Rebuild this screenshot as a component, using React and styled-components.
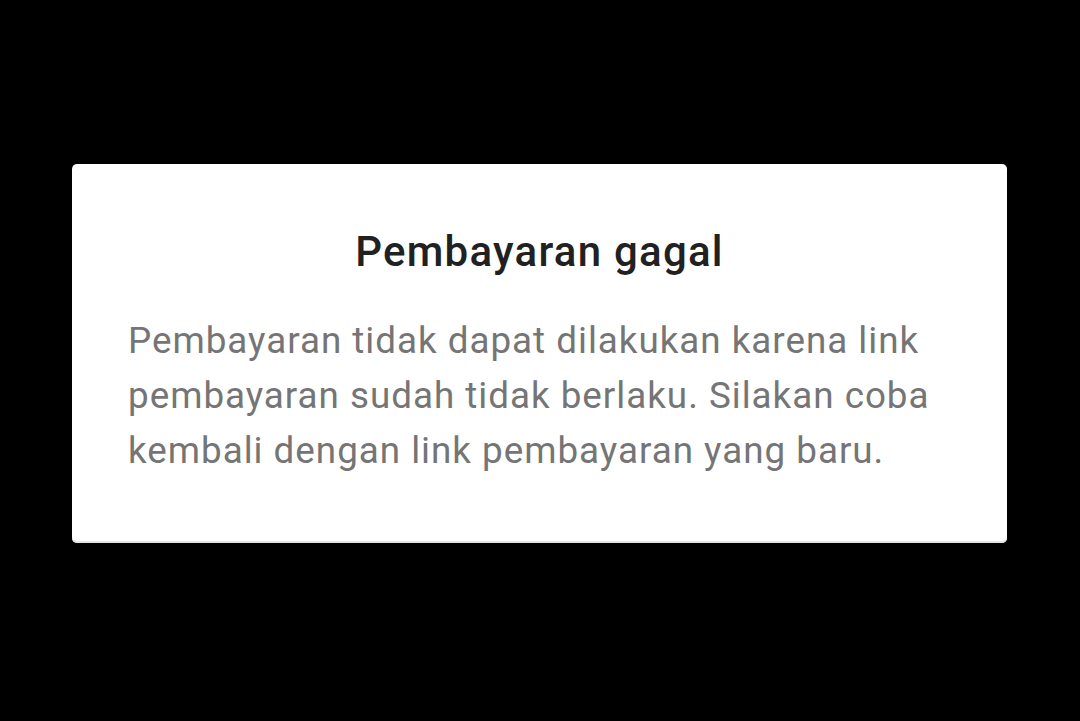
import React from "react";
import styled, { createGlobalStyle } from "styled-components";

const GlobalReset = createGlobalStyle`
  html,
  body,
  #root {
    margin: 0;
    padding: 0;
    box-sizing: border-box;
  }
  body {
    background-color: #000;
    font-family: Roboto, "Noto Sans", "Liberation Sans", sans-serif;
  }
`;

const Screen = styled.div`
  width: 100%;
  min-height: 100vh;
  background-color: #000;
  padding: 164px 73px 0 72px;
  box-sizing: border-box;
`;

const Dialog = styled.div`
  background-color: #fff;
  border-radius: 5px;
  padding: 63px 56px 65px 56px;
  box-shadow: inset 0 -2px 0 #e6e6e6;
`;

const Title = styled.h2`
  margin: 0;
  text-align: center;
  font-size: 42px;
  line-height: 50px;
  font-weight: 500;
  letter-spacing: 1.25px;
  color: #212121;
`;

const Message = styled.p`
  margin: 36px 0 0;
  font-size: 36.8px;
  line-height: 55px;
  font-weight: 400;
  letter-spacing: 0.98px;
  color: #757575;
`;

const App = () => {
  return (
    <>
      <GlobalReset />
      <Screen>
        <Dialog>
          <Title>Pembayaran gagal</Title>
          <Message>
            Pembayaran tidak dapat dilakukan karena link pembayaran sudah tidak
            berlaku. Silakan coba kembali dengan link pembayaran yang baru.
          </Message>
        </Dialog>
      </Screen>
    </>
  );
};

export default App;
